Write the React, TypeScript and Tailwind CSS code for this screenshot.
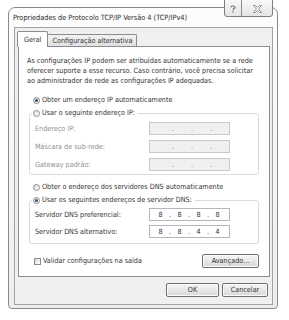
import React from "react";

function Radio({ checked }: { checked?: boolean }) {
  return (
    <span className="w-[7px] h-[7px] rounded-full border border-[#8c8c8c] bg-gradient-to-br from-[#dcdcdc] to-[#ffffff] flex items-center justify-center shrink-0">
      {checked && <span className="w-[3px] h-[3px] rounded-full bg-[#2a5678]" />}
    </span>
  );
}

function IpField({ values, disabled }: { values?: string[]; disabled?: boolean }) {
  const v = values ?? ["", "", "", ""];
  return (
    <div
      className={
        disabled
          ? "w-[81px] h-[13px] border border-[#c9c9c9] bg-[#f0f0f0] text-[#7a7a7a] flex items-center pl-[9px]"
          : "w-[81px] h-[13px] border border-[#b3b6bc] bg-white text-[#333333] flex items-center pl-[6px]"
      }
    >
      {v.map((x, i) => (
        <React.Fragment key={i}>
          <span className="w-[9px] text-center">{x}</span>
          {i < 3 && <span className="w-[10px] text-center">.</span>}
        </React.Fragment>
      ))}
    </div>
  );
}

function Row({ label, children, disabled }: { label: string; children: React.ReactNode; disabled?: boolean }) {
  return (
    <div className="flex items-center h-[13px]">
      <span className={disabled ? "w-[119px] pl-[5px] text-[#8f8f8f]" : "w-[119px] pl-[5px]"}>{label}</span>
      {children}
    </div>
  );
}

function Button({ children, w }: { children: React.ReactNode; w: string }) {
  return (
    <div
      className={
        "h-[14px] rounded-[2px] border border-[#707070] bg-gradient-to-b from-[#f4f4f4] via-[#e8e8e8] to-[#d6d6d6] flex items-center justify-center shadow-[inset_0_0_0_1px_#fbfbfb] " +
        w
      }
    >
      {children}
    </div>
  );
}

export default function App() {
  return (
    <div className="w-[289px] h-[320px] bg-white relative overflow-hidden text-[7.2px] leading-[10px] text-[#333333] font-['DejaVu_Sans_Condensed','DejaVu_Sans',sans-serif]">
      {/* window */}
      <div className="ml-[8px] mt-[7px] w-[270px] h-[302px] border border-[#8a8a8a] rounded-t-[7px] rounded-b-[4px] bg-gradient-to-b from-[#fdfdfd] to-[#eceef1] flex flex-col pl-[5px] pr-[4px] pb-[3px]">
        <div className="h-[19px] flex items-center text-[7.3px] text-[#2a2a2a] -ml-[1px]">
          Propriedades de Protocolo TCP/IP Versão 4 (TCP/IPv4)
        </div>
        <div className="flex-1 border border-[#a3a3a3] bg-[#f0f0f0] flex flex-col">
          {/* tabs */}
          <div className="flex items-end pl-[2px] pt-[2px] h-[18px]">
            <div className="relative z-10 h-[16px] -mb-[1px] px-[6px] bg-white border border-b-0 border-[#898c95] rounded-t-[2px] flex items-center">
              Geral
            </div>
            <div className="h-[12px] px-[4px] bg-gradient-to-b from-[#f3f3f3] to-[#e0e0e0] border border-b-0 border-l-0 border-[#898c95] rounded-tr-[2px] flex items-center">
              Configuração alternativa
            </div>
          </div>
          {/* panel */}
          <div className="ml-[3px] mr-[2px] h-[231px] border border-[#898c95] bg-white flex flex-col">
            <p className="pl-[8px] pt-[9px]">
              As configurações IP podem ser atribuídas automaticamente se a rede
              <br />
              oferecer suporte a esse recurso. Caso contrário, você precisa solicitar
              <br />
              ao administrador de rede as configurações IP adequadas.
            </p>
            <div className="mt-[9px] ml-[14px] h-[10px] flex items-center gap-[2px]">
              <Radio checked />
              <span>Obter um endereço IP automaticamente</span>
            </div>
            <fieldset className="mt-[3px] ml-[10px] mr-[10px] border border-[#d5dce2] rounded-[3px] flex flex-col pb-[3px]">
              <legend className="ml-[2px] pl-[1px] pr-[3px] h-[10px] flex items-center gap-[2px]">
                <Radio />
                <span>Usar o seguinte endereço IP:</span>
              </legend>
              <div className="pt-[4px] flex flex-col gap-[5px]">
                <Row label="Endereço IP:" disabled>
                  <IpField disabled />
                </Row>
                <Row label="Máscara de sub-rede:" disabled>
                  <IpField disabled />
                </Row>
                <Row label="Gateway padrão:" disabled>
                  <IpField disabled />
                </Row>
              </div>
            </fieldset>
            <div className="mt-[7px] ml-[14px] h-[10px] flex items-center gap-[2px]">
              <Radio />
              <span>Obter o endereço dos servidores DNS automaticamente</span>
            </div>
            <fieldset className="mt-[3px] ml-[10px] mr-[10px] border border-[#d5dce2] rounded-[3px] flex flex-col pb-[5px]">
              <legend className="ml-[2px] pl-[1px] pr-[3px] h-[10px] flex items-center gap-[2px]">
                <Radio checked />
                <span>Usar os seguintes endereços de servidor DNS:</span>
              </legend>
              <div className="pt-[3px] flex flex-col gap-[4px]">
                <Row label="Servidor DNS preferencial:">
                  <IpField values={["8", "8", "8", "8"]} />
                </Row>
                <Row label="Servidor DNS alternativo:">
                  <IpField values={["8", "8", "4", "4"]} />
                </Row>
              </div>
            </fieldset>
            <div className="mt-[10px] ml-[15px] mr-[10px] flex items-center justify-between">
              <div className="flex items-center gap-[2px]">
                <span className="w-[7px] h-[7px] border border-[#8c8c8c] bg-gradient-to-br from-[#dcdcdc] to-[#ffffff]" />
                <span>Validar configurações na saída</span>
              </div>
              <Button w="w-[57px]">Avançado...</Button>
            </div>
          </div>
          {/* bottom buttons */}
          <div className="mt-[6px] flex justify-end gap-[3px] pr-[4px]">
            <Button w="w-[53px]">OK</Button>
            <Button w="w-[46px]">Cancelar</Button>
          </div>
        </div>
      </div>
      {/* caption buttons */}
      <div className="absolute left-[224px] top-[-2px] h-[19px] w-[49px] flex border border-[#7d7d7d] rounded-b-[3px] bg-gradient-to-b from-[#fafafa] to-[#e4e4e4]">
        <div className="w-[17px] h-full border-r border-[#8a8a8a] flex items-center justify-center pt-[2px]">
          <svg width="6" height="8" viewBox="0 0 6 8">
            <path d="M1 2.2 C1 0.6 5 0.6 5 2.4 C5 3.6 3 3.6 3 5.2" fill="none" stroke="#6a6a6a" strokeWidth="1.1" />
            <rect x="2.4" y="6.2" width="1.3" height="1.3" fill="#6a6a6a" />
          </svg>
        </div>
        <div className="flex-1 h-full flex items-center justify-center pt-[2px]">
          <svg width="9" height="8" viewBox="0 0 9 8">
            <path d="M0.5 0.5 H2.5 L4.5 2.5 L6.5 0.5 H8.5 L5.5 4 L8.5 7.5 H6.5 L4.5 5.5 L2.5 7.5 H0.5 L3.5 4 Z" fill="#ffffff" stroke="#7a7a7a" strokeWidth="0.8" />
          </svg>
        </div>
      </div>
    </div>
  );
}
